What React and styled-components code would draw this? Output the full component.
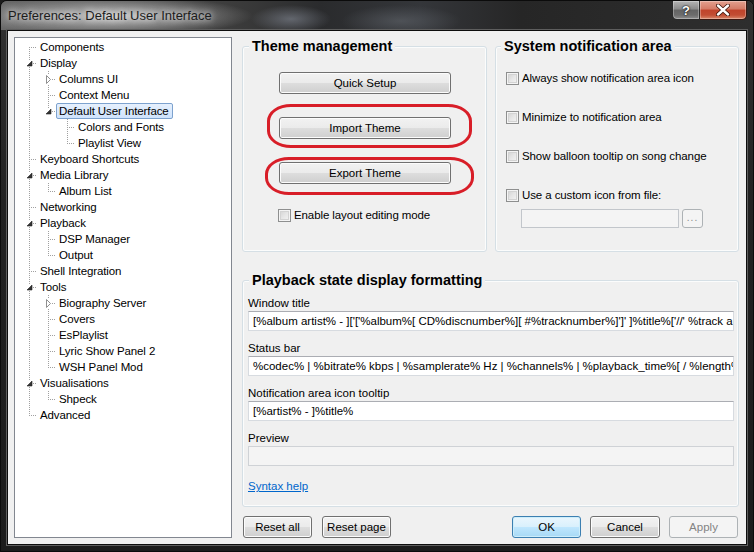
import React from "react";
import styled, { createGlobalStyle, css } from "styled-components";

const GlobalStyle = createGlobalStyle`
  html, body {
    margin: 0;
    padding: 0;
    background: #1b1b1b;
  }
  body {
    font-family: "Liberation Sans", Arial, sans-serif;
  }
  * {
    box-sizing: border-box;
  }
`;

const uiFont = `11.5px "Liberation Sans", Arial, sans-serif`;

const Window = styled.div`
  width: 754px;
  height: 552px;
  display: flex;
  flex-direction: column;
  border: 1px solid #0b0b0b;
  border-radius: 7px 7px 0 0;
  overflow: hidden;
  background: linear-gradient(180deg, #4a4a4a 0, #303030 30px, #222 200px, #1c1c1c 100%);
`;

const TitleBar = styled.div`
  height: 29px;
  flex: none;
  display: flex;
  align-items: flex-start;
  padding-left: 7px;
  background:
    radial-gradient(ellipse 140px 20px at 112px 15px, rgba(205, 205, 205, 0.9), rgba(205, 205, 205, 0) 100%),
    radial-gradient(ellipse 40px 14px at 290px 18px, rgba(120, 125, 135, 0.7), rgba(120, 125, 135, 0)),
    radial-gradient(ellipse 60px 16px at 400px 20px, rgba(90, 94, 100, 0.7), rgba(90, 94, 100, 0)),
    linear-gradient(90deg, #6a6a6a 0, #5a5a5a 60px, #3a3a3a 240px, #2a2b2d 320px, #34363a 420px, #262626 520px, #2e2e2e 100%);
`;

const TitleText = styled.span`
  margin-top: 7px;
  font: 13px "Liberation Sans", Arial, sans-serif;
  color: #1c1c1c;
  text-shadow: 0 0 6px rgba(255, 255, 255, 0.85), 0 0 10px rgba(255, 255, 255, 0.5);
`;

const CaptionButtons = styled.div`
  margin-left: auto;
  margin-right: 6px;
  display: flex;
`;

const CaptionButton = styled.div`
  height: 19px;
  width: ${(p) => p.$w}px;
  display: flex;
  align-items: center;
  justify-content: center;
  border: 1px solid #2a2a2a;
  border-top: none;
  box-shadow: inset 0 0 0 1px rgba(255, 255, 255, 0.3);
  color: #fff;
  font: bold 13px "Liberation Sans", Arial, sans-serif;
  text-shadow: 0 0 2px #000, 0 0 1px #000;
  ${(p) =>
    p.$close
      ? css`
          border-left: none;
          border-radius: 0 0 5px 0;
          border-color: #3b1710;
          background: linear-gradient(180deg, #e3a08f 0, #d47b66 45%, #c0432b 50%, #c24d33 78%, #d9886b 100%);
        `
      : css`
          border-radius: 0 0 0 5px;
          background: linear-gradient(180deg, #b4b4b4 0, #8a8a8a 45%, #646464 50%, #6c6c6c 78%, #8e8e8e 100%);
        `}
`;

const Client = styled.div`
  flex: 1;
  margin: 0 6px 6px;
  display: flex;
  gap: 10px;
  padding: 6px 7px 6px 6px;
  background: #f0f0f0;
  border: 1px solid #0d0d0d;
  box-shadow: 0 0 0 1px #5e5e5e;
`;

/* ---------- tree ---------- */

const Tree = styled.div`
  width: 218px;
  flex: none;
  background: #fff;
  border: 1px solid #828790;
  padding: 1px 0 0 5px;
  font: ${uiFont};
  color: #000;
`;

const TreeRow = styled.div`
  display: flex;
  height: 16px;
  white-space: nowrap;
`;

const dotsV = "repeating-linear-gradient(to bottom, #a0a0a0 0 1px, transparent 1px 2px)";
const dotsH = "repeating-linear-gradient(to right, #a0a0a0 0 1px, transparent 1px 2px)";

const Guide = styled.span`
  width: 19px;
  flex: none;
  ${(p) =>
    p.$line &&
    css`
      background: ${dotsV} 9px 0 / 1px 16px no-repeat;
    `}
`;

const Connector = styled.span`
  width: 19px;
  flex: none;
  display: flex;
  align-items: center;
  background: ${(p) =>
    [
      `${dotsH} 9px 8px / 8px 1px no-repeat`,
      p.$up ? `${dotsV} 9px 0 / 1px 8px no-repeat` : null,
      p.$down ? `${dotsV} 9px 8px / 1px 8px no-repeat` : null,
    ]
      .filter(Boolean)
      .join(", ")};
`;

const Expander = styled.svg`
  margin-left: ${(p) => p.$ml}px;
  flex: none;
`;

const TreeLabel = styled.span`
  margin-left: -2px;
  padding: 0 3px 0 2px;
  border: 1px solid transparent;
  border-radius: 2px;
  line-height: 14px;
  letter-spacing: -0.1px;
  ${(p) =>
    p.$selected &&
    css`
      border-color: #7da2ce;
      background: linear-gradient(180deg, #e6f0fd 0, #cfe3fc 100%);
    `}
`;

const treeData = [
  { label: "Components" },
  {
    label: "Display",
    children: [
      { label: "Columns UI", collapsed: true },
      { label: "Context Menu" },
      {
        label: "Default User Interface",
        selected: true,
        children: [{ label: "Colors and Fonts" }, { label: "Playlist View" }],
      },
    ],
  },
  { label: "Keyboard Shortcuts" },
  { label: "Media Library", children: [{ label: "Album List" }] },
  { label: "Networking" },
  { label: "Playback", children: [{ label: "DSP Manager" }, { label: "Output" }] },
  { label: "Shell Integration" },
  {
    label: "Tools",
    children: [
      { label: "Biography Server", collapsed: true },
      { label: "Covers" },
      { label: "EsPlaylist" },
      { label: "Lyric Show Panel 2" },
      { label: "WSH Panel Mod" },
    ],
  },
  { label: "Visualisations", children: [{ label: "Shpeck" }] },
  { label: "Advanced" },
];

function flatten(nodes, guides = [], out = []) {
  nodes.forEach((node, i) => {
    const last = i === nodes.length - 1;
    out.push({ ...node, guides, last, first: guides.length === 0 && i === 0 });
    if (node.children) flatten(node.children, [...guides, !last], out);
  });
  return out;
}

const treeRows = flatten(treeData);

function TreeItem({ row }) {
  return (
    <TreeRow>
      {row.guides.map((g, i) => (
        <Guide key={i} $line={g} />
      ))}
      <Connector $up={!row.first} $down={!row.last}>
        {row.children && (
          <Expander $ml={6} width="7" height="7" viewBox="0 0 7 7">
            <rect x="0" y="0" width="7" height="7" fill="#fff" />
            <path d="M6 1 L6 6 L1 6 Z" fill="#333" stroke="#262626" strokeWidth="0.6" />
          </Expander>
        )}
        {row.collapsed && (
          <Expander $ml={6} width="7" height="9" viewBox="0 0 7 9">
            <rect x="0" y="0" width="7" height="9" fill="#fff" />
            <path d="M1.5 0.5 L5.5 4.5 L1.5 8.5 Z" fill="#fff" stroke="#8f8f8f" strokeWidth="1" />
          </Expander>
        )}
      </Connector>
      <TreeLabel $selected={row.selected}>{row.label}</TreeLabel>
    </TreeRow>
  );
}

/* ---------- right side ---------- */

const RightPane = styled.div`
  flex: 1;
  display: flex;
  flex-direction: column;
  padding-top: 9px;
  font: ${uiFont};
  color: #000;
`;

const TopRow = styled.div`
  display: flex;
  gap: 8px;
  height: 206px;
`;

const GroupBox = styled.div`
  display: flex;
  flex-direction: column;
  align-items: flex-start;
  border: 1px solid #d5dfe5;
  border-radius: 3px;
  box-shadow: inset 0 0 0 1px #fbfcfc;
  ${(p) => p.$width && `width: ${p.$width}px; flex: none;`}
  ${(p) => !p.$width && `flex: 1;`}
  ${(p) => p.$height && `height: ${p.$height}px;`}
  ${(p) => p.$mt && `margin-top: ${p.$mt}px;`}
`;

const GroupTitle = styled.div`
  margin: -10px 0 0 ${(p) => p.$ml || 6}px;
  padding: 0 3px;
  background: #f0f0f0;
  font: bold 14.5px "Liberation Sans", Arial, sans-serif;
  line-height: 18px;
  color: #000;
`;

const Button = styled.button`
  width: ${(p) => p.$w || 70}px;
  height: 22px;
  flex: none;
  padding: 0;
  font: ${uiFont};
  color: #000;
  border: 1px solid #707070;
  border-radius: 3px;
  background: linear-gradient(180deg, #f2f2f2 0, #ebebeb 48%, #dddddd 52%, #cfcfcf 100%);
  box-shadow: inset 0 0 0 1px #fcfcfc;
  ${(p) => p.$ml && `margin-left: ${p.$ml}px;`}
  ${(p) => p.$mt && `margin-top: ${p.$mt}px;`}
  ${(p) =>
    p.$default &&
    css`
      border-color: #3c7fb1;
      background: linear-gradient(180deg, #eaf6fd 0, #d9f0fc 48%, #bee6fd 52%, #a7d9f5 100%);
      box-shadow: inset 0 0 0 1px #cdeefb;
    `}
  ${(p) =>
    p.$disabled &&
    css`
      color: #838383;
      border-color: #adb2b5;
      background: #f4f4f4;
      box-shadow: none;
    `}
`;

const Annotation = styled.div`
  border: 3px solid #d81e28;
  border-radius: 24px / 17px;
  padding: ${(p) => p.$pad};
  margin-left: ${(p) => p.$ml}px;
  margin-top: ${(p) => p.$mt}px;
`;

const CheckRow = styled.label`
  display: flex;
  align-items: center;
  gap: 3px;
  height: 16px;
  margin-left: ${(p) => p.$ml}px;
  margin-top: ${(p) => p.$mt}px;
  white-space: nowrap;
  letter-spacing: -0.1px;
`;

const CheckBox = styled.span`
  width: 13px;
  height: 13px;
  flex: none;
  border: 1px solid #8e8f8f;
  background: linear-gradient(135deg, #cfcfcf 0, #e6e6e6 50%, #f6f6f6 100%);
  box-shadow: inset 0 0 0 1px #f4f4f4, inset 0 0 0 2px #d3d3d3;
`;

const FileRow = styled.div`
  display: flex;
  gap: 3px;
  margin: 6px 0 0 25px;
`;

const FileField = styled.div`
  width: 158px;
  height: 19px;
  border: 1px solid #c2c6cb;
  background: #f4f4f4;
`;

const BrowseButton = styled.div`
  width: 21px;
  height: 19px;
  display: flex;
  align-items: flex-end;
  justify-content: center;
  padding-bottom: 4px;
  border: 1px solid #adb2b5;
  border-radius: 3px;
  background: #f4f4f4;
  color: #8a8a8a;
  font-size: 10px;
  line-height: 10px;
  letter-spacing: 1px;
`;

const FieldLabel = styled.div`
  height: 15px;
  line-height: 15px;
  margin: ${(p) => p.$mt}px 0 0 5px;
`;

const TextField = styled.div`
  width: 486px;
  height: 20px;
  margin-left: 5px;
  padding: 0 4px;
  line-height: 18px;
  white-space: nowrap;
  overflow: hidden;
  border: 1px solid #d7dbe0;
  border-top-color: #abadb3;
  background: ${(p) => (p.$disabled ? "#f4f4f4" : "#fff")};
  ${(p) => p.$disabled && `border-color: #cfd2d6;`}
`;

const Link = styled.a`
  margin: 13px 0 0 5px;
  line-height: 15px;
  color: #0066cc;
  text-decoration: underline;
  cursor: pointer;
`;

const ButtonBar = styled.div`
  display: flex;
  align-items: center;
  margin-top: 9px;
  padding: 0 1px;
`;

const ButtonGroup = styled.div`
  display: flex;
  gap: ${(p) => p.$gap}px;
  ${(p) => p.$right && `margin-left: auto;`}
`;

export default function App() {
  return (
    <>
      <GlobalStyle />
      <Window>
        <TitleBar>
          <TitleText>Preferences: Default User Interface</TitleText>
          <CaptionButtons>
            <CaptionButton $w={28}>?</CaptionButton>
            <CaptionButton $w={47} $close>
              <svg width="14" height="12" viewBox="0 0 14 12">
                <path d="M2 1.5 L12 10.5 M12 1.5 L2 10.5" stroke="#3a1208" strokeWidth="4" strokeLinecap="round" />
                <path d="M2 1.5 L12 10.5 M12 1.5 L2 10.5" stroke="#fff" strokeWidth="2.4" strokeLinecap="round" />
              </svg>
            </CaptionButton>
          </CaptionButtons>
        </TitleBar>

        <Client>
          <Tree>
            {treeRows.map((row) => (
              <TreeItem key={row.label} row={row} />
            ))}
          </Tree>

          <RightPane>
            <TopRow>
              <GroupBox $width={245}>
                <GroupTitle>Theme management</GroupTitle>
                <Button $w={172} $ml={36} $mt={17}>
                  Quick Setup
                </Button>
                <Annotation $ml={24} $mt={10} $pad="10px 18px 6px 9px">
                  <Button $w={172}>Import Theme</Button>
                </Annotation>
                <Annotation $ml={22} $mt={9} $pad="2px 20px 8px 11px">
                  <Button $w={172}>Export Theme</Button>
                </Annotation>
                <CheckRow $ml={35} $mt={12}>
                  <CheckBox />
                  Enable layout editing mode
                </CheckRow>
              </GroupBox>

              <GroupBox>
                <GroupTitle $ml={5}>System notification area</GroupTitle>
                <CheckRow $ml={10} $mt={15}>
                  <CheckBox />
                  Always show notification area icon
                </CheckRow>
                <CheckRow $ml={10} $mt={23}>
                  <CheckBox />
                  Minimize to notification area
                </CheckRow>
                <CheckRow $ml={10} $mt={23}>
                  <CheckBox />
                  Show balloon tooltip on song change
                </CheckRow>
                <CheckRow $ml={10} $mt={23}>
                  <CheckBox />
                  Use a custom icon from file:
                </CheckRow>
                <FileRow>
                  <FileField />
                  <BrowseButton>...</BrowseButton>
                </FileRow>
              </GroupBox>
            </TopRow>

            <GroupBox $height={224} $mt={28}>
              <GroupTitle>Playback state display formatting</GroupTitle>
              <FieldLabel $mt={7}>Window title</FieldLabel>
              <TextField>
                [%album artist% - ]['['%album%[ CD%discnumber%][ #%tracknumber%]']' ]%title%['//' %track artist%]
              </TextField>
              <FieldLabel $mt={10}>Status bar</FieldLabel>
              <TextField>
                %codec% | %bitrate% kbps | %samplerate% Hz | %channels% | %playback_time%[ / %length%]
              </TextField>
              <FieldLabel $mt={10}>Notification area icon tooltip</FieldLabel>
              <TextField>[%artist% - ]%title%</TextField>
              <FieldLabel $mt={10}>Preview</FieldLabel>
              <TextField $disabled />
              <Link>Syntax help</Link>
            </GroupBox>

            <ButtonBar>
              <ButtonGroup $gap={10}>
                <Button $w={69}>Reset all</Button>
                <Button $w={69}>Reset page</Button>
              </ButtonGroup>
              <ButtonGroup $gap={9} $right>
                <Button $w={69} $default>
                  OK
                </Button>
                <Button $w={70}>Cancel</Button>
                <Button $w={69} $disabled>
                  Apply
                </Button>
              </ButtonGroup>
            </ButtonBar>
          </RightPane>
        </Client>
      </Window>
    </>
  );
}
